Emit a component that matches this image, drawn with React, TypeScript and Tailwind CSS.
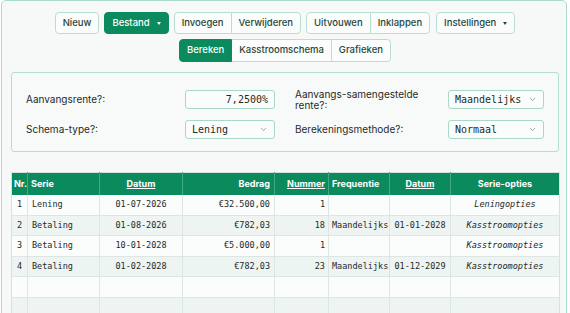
import { ChevronDown } from "lucide-react";

const sans = "font-['Inter','Noto_Sans',sans-serif]";
const mono = "font-['DejaVu_Sans_Mono','Liberation_Mono',monospace]";

interface Row {
  nr: string;
  serie: string;
  datum: string;
  bedrag: string;
  nummer: string;
  frequentie: string;
  datum2: string;
  opties: string;
}

const ROWS: Row[] = [
  { nr: "1", serie: "Lening", datum: "01-07-2026", bedrag: "€32.500,00", nummer: "1", frequentie: "", datum2: "", opties: "Leningopties" },
  { nr: "2", serie: "Betaling", datum: "01-08-2026", bedrag: "€782,03", nummer: "18", frequentie: "Maandelijks", datum2: "01-01-2028", opties: "Kasstroomopties" },
  { nr: "3", serie: "Betaling", datum: "10-01-2028", bedrag: "€5.000,00", nummer: "1", frequentie: "", datum2: "", opties: "Kasstroomopties" },
  { nr: "4", serie: "Betaling", datum: "01-02-2028", bedrag: "€782,03", nummer: "23", frequentie: "Maandelijks", datum2: "01-12-2029", opties: "Kasstroomopties" },
  { nr: "", serie: "", datum: "", bedrag: "", nummer: "", frequentie: "", datum2: "", opties: "" },
  { nr: "", serie: "", datum: "", bedrag: "", nummer: "", frequentie: "", datum2: "", opties: "" },
];

function Caret({ light }: { light?: boolean }) {
  return (
    <span
      className={`ml-[7px] inline-block h-0 w-0 border-x-[2.5px] border-t-[3px] border-x-transparent ${
        light ? "border-t-white" : "border-t-[#2a4a3f]"
      }`}
    />
  );
}

function Btn({ children, className = "" }: { children: React.ReactNode; className?: string }) {
  return (
    <button
      className={`flex h-[22px] items-center border border-[#b9ddd0] bg-[#fbfdfc] px-[7px] text-[9.5px] font-medium text-[#27463b] ${className}`}
    >
      {children}
    </button>
  );
}

function Field({ value, select, width }: { value: string; select?: boolean; width: string }) {
  return (
    <div
      className={`flex h-[19px] items-center rounded-[3px] border border-[#a9d8c7] bg-[#fbfdfc] px-[6px] text-[10px] text-[#1d2b27] ${mono} ${width} ${
        select ? "justify-between" : "justify-end"
      }`}
    >
      <span>{value}</span>
      {select && <ChevronDown className="h-[9px] w-[9px] text-[#7c8a86]" strokeWidth={2} />}
    </div>
  );
}

export default function App() {
  return (
    <div className={`h-[313px] w-[570px] overflow-hidden bg-white ${sans}`}>
      <div className="ml-px h-[330px] w-[566px] rounded-t-[5px] border border-[#a9dcca] bg-[#f7f9f9] pl-[9px] pt-[11px]">
        <div className="w-[548px]">
          {/* toolbar */}
          <div className="flex justify-center gap-[5px]">
            <Btn className="rounded-[4px]">Nieuw</Btn>
            <button className="flex h-[22px] items-center rounded-[4px] border border-[#0b8a5e] bg-[#0b8a5e] px-[7px] text-[9.5px] font-medium text-white">
              Bestand
              <Caret light />
            </button>
            <div className="flex">
              <Btn className="rounded-l-[4px]">Invoegen</Btn>
              <Btn className="-ml-px rounded-r-[4px]">Verwijderen</Btn>
            </div>
            <div className="flex">
              <Btn className="rounded-l-[4px]">Uitvouwen</Btn>
              <Btn className="-ml-px rounded-r-[4px]">Inklappen</Btn>
            </div>
            <Btn className="ml-px rounded-[4px]">
              Instellingen
              <Caret />
            </Btn>
          </div>
          <div className="mt-[5px] flex justify-center">
            <button className="flex h-[23px] items-center rounded-l-[4px] border border-[#0b8a5e] bg-[#0b8a5e] px-[7px] text-[9.5px] font-medium text-white">
              Bereken
            </button>
            <Btn className="h-[23px] border-l-0">Kasstroomschema</Btn>
            <Btn className="-ml-px h-[23px] rounded-r-[4px]">Grafieken</Btn>
          </div>

          {/* settings */}
          <div className="mt-[10px] grid h-[80px] grid-cols-2 content-start gap-x-5 gap-y-[10px] rounded-[3px] border border-[#b5e0d0] bg-[#f8fafa] px-[14px] pt-[16px] text-[10px] text-[#1f2a27]">
            <div className="flex h-[21px] items-center justify-between">
              <span>Aanvangsrente?:</span>
              <Field value="7,2500%" width="w-[90px]" />
            </div>
            <div className="flex h-[21px] items-center justify-between">
              <span className="leading-[11px]">
                Aanvangs-samengestelde
                <br />
                rente?:
              </span>
              <Field value="Maandelijks" select width="w-[96px]" />
            </div>
            <div className="flex items-center justify-between">
              <span>Schema-type?:</span>
              <Field value="Lening" select width="w-[90px]" />
            </div>
            <div className="flex items-center justify-between">
              <span>Berekeningsmethode?:</span>
              <Field value="Normaal" select width="w-[96px]" />
            </div>
          </div>

          {/* table */}
          <table className="mt-[20px] w-[548px] table-fixed border-collapse border border-[#d6e2de]">
            <colgroup>
              <col className="w-[16px]" />
              <col className="w-[72px]" />
              <col className="w-[83px]" />
              <col className="w-[92px]" />
              <col className="w-[54px]" />
              <col className="w-[61px]" />
              <col className="w-[61px]" />
              <col className="w-[109px]" />
            </colgroup>
            <thead>
              <tr className="h-[22px] bg-[#0b8a5e] text-[9px] font-semibold text-white">
                <th className="border-r border-[#43a883] px-[2px] text-left">Nr.</th>
                <th className="border-r border-[#43a883] px-[3px] text-left">Serie</th>
                <th className="border-r border-[#43a883] text-center underline">Datum</th>
                <th className="border-r border-[#43a883] px-[4px] text-right">Bedrag</th>
                <th className="border-r border-[#43a883] px-[3px] text-right underline">Nummer</th>
                <th className="border-r border-[#43a883] px-[3px] text-left">Frequentie</th>
                <th className="border-r border-[#43a883] text-center underline">Datum</th>
                <th className="text-center">Serie-opties</th>
              </tr>
            </thead>
            <tbody className={`text-[8.5px] text-[#1f2a27] ${mono}`}>
              {ROWS.map((r, i) => (
                <tr key={i} className={`h-[20.5px] border-b border-[#dde6e3] ${i % 2 === 0 ? "bg-[#fbfcfc]" : "bg-[#edf4f2]"}`}>
                  <td className="border-r border-[#dde6e3] text-center">{r.nr}</td>
                  <td className="border-r border-[#dde6e3] px-[4px]">{r.serie}</td>
                  <td className="border-r border-[#dde6e3] text-center">{r.datum}</td>
                  <td className="border-r border-[#dde6e3] px-[4px] text-right">{r.bedrag}</td>
                  <td className="border-r border-[#dde6e3] px-[3px] text-right">{r.nummer}</td>
                  <td className="border-r border-[#dde6e3] px-[3px]">{r.frequentie}</td>
                  <td className="border-r border-[#dde6e3] text-center">{r.datum2}</td>
                  <td className="text-center italic">{r.opties}</td>
                </tr>
              ))}
            </tbody>
          </table>
        </div>
      </div>
    </div>
  );
}
